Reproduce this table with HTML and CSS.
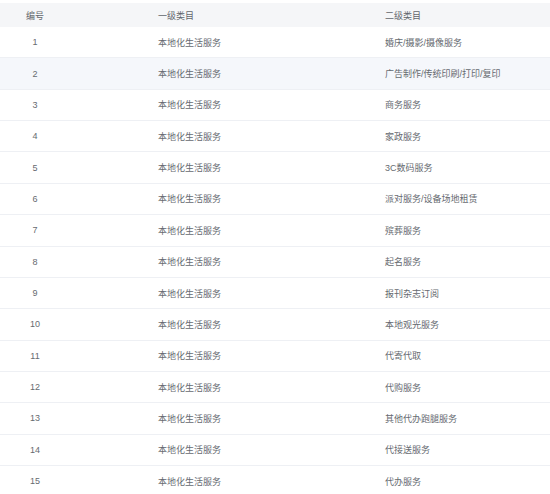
FILE: index.html
```html
<!DOCTYPE html>
<html lang="zh-CN">
<head>
<meta charset="utf-8">
<title>类目表</title>
<link rel="stylesheet" href="styles.css">
</head>
<body>
<div class="table">
  <div class="row head">
    <div class="c1">编号</div><div class="c2">一级类目</div><div class="c3">二级类目</div>
  </div>
  <div class="row"><div class="c1">1</div><div class="c2">本地化生活服务</div><div class="c3">婚庆/摄影/摄像服务</div></div>
  <div class="row hover"><div class="c1">2</div><div class="c2">本地化生活服务</div><div class="c3">广告制作/传统印刷/打印/复印</div></div>
  <div class="row"><div class="c1">3</div><div class="c2">本地化生活服务</div><div class="c3">商务服务</div></div>
  <div class="row"><div class="c1">4</div><div class="c2">本地化生活服务</div><div class="c3">家政服务</div></div>
  <div class="row"><div class="c1">5</div><div class="c2">本地化生活服务</div><div class="c3">3C数码服务</div></div>
  <div class="row"><div class="c1">6</div><div class="c2">本地化生活服务</div><div class="c3">派对服务/设备场地租赁</div></div>
  <div class="row"><div class="c1">7</div><div class="c2">本地化生活服务</div><div class="c3">殡葬服务</div></div>
  <div class="row"><div class="c1">8</div><div class="c2">本地化生活服务</div><div class="c3">起名服务</div></div>
  <div class="row"><div class="c1">9</div><div class="c2">本地化生活服务</div><div class="c3">报刊杂志订阅</div></div>
  <div class="row"><div class="c1">10</div><div class="c2">本地化生活服务</div><div class="c3">本地观光服务</div></div>
  <div class="row"><div class="c1">11</div><div class="c2">本地化生活服务</div><div class="c3">代寄代取</div></div>
  <div class="row"><div class="c1">12</div><div class="c2">本地化生活服务</div><div class="c3">代购服务</div></div>
  <div class="row"><div class="c1">13</div><div class="c2">本地化生活服务</div><div class="c3">其他代办跑腿服务</div></div>
  <div class="row"><div class="c1">14</div><div class="c2">本地化生活服务</div><div class="c3">代接送服务</div></div>
  <div class="row"><div class="c1">15</div><div class="c2">本地化生活服务</div><div class="c3">代办服务</div></div>
</div>
</body>
</html>
```

FILE: styles.css
```css
html, body {
  margin: 0;
  padding: 0;
  background: #ffffff;
}
body {
  padding-top: 3px;
  font-family: "Liberation Sans", "Noto Sans CJK SC", sans-serif;
  font-size: 9px;
  color: #666a70;
  overflow: hidden;
}
.table {
  display: flex;
  flex-direction: column;
}
.row {
  display: grid;
  grid-template-columns: 70px 315px 1fr;
  align-items: center;
  height: 31.36px;
  box-sizing: border-box;
  border-bottom: 1px solid #eef0f4;
}
.row.head {
  height: 24px;
  background: #f5f6f8;
  border-bottom: none;
  color: #62666c;
}
.row.hover {
  background: #f5f7fb;
}
.c1 {
  text-align: center;
}
.c2 {
  padding-left: 88px;
}
```
